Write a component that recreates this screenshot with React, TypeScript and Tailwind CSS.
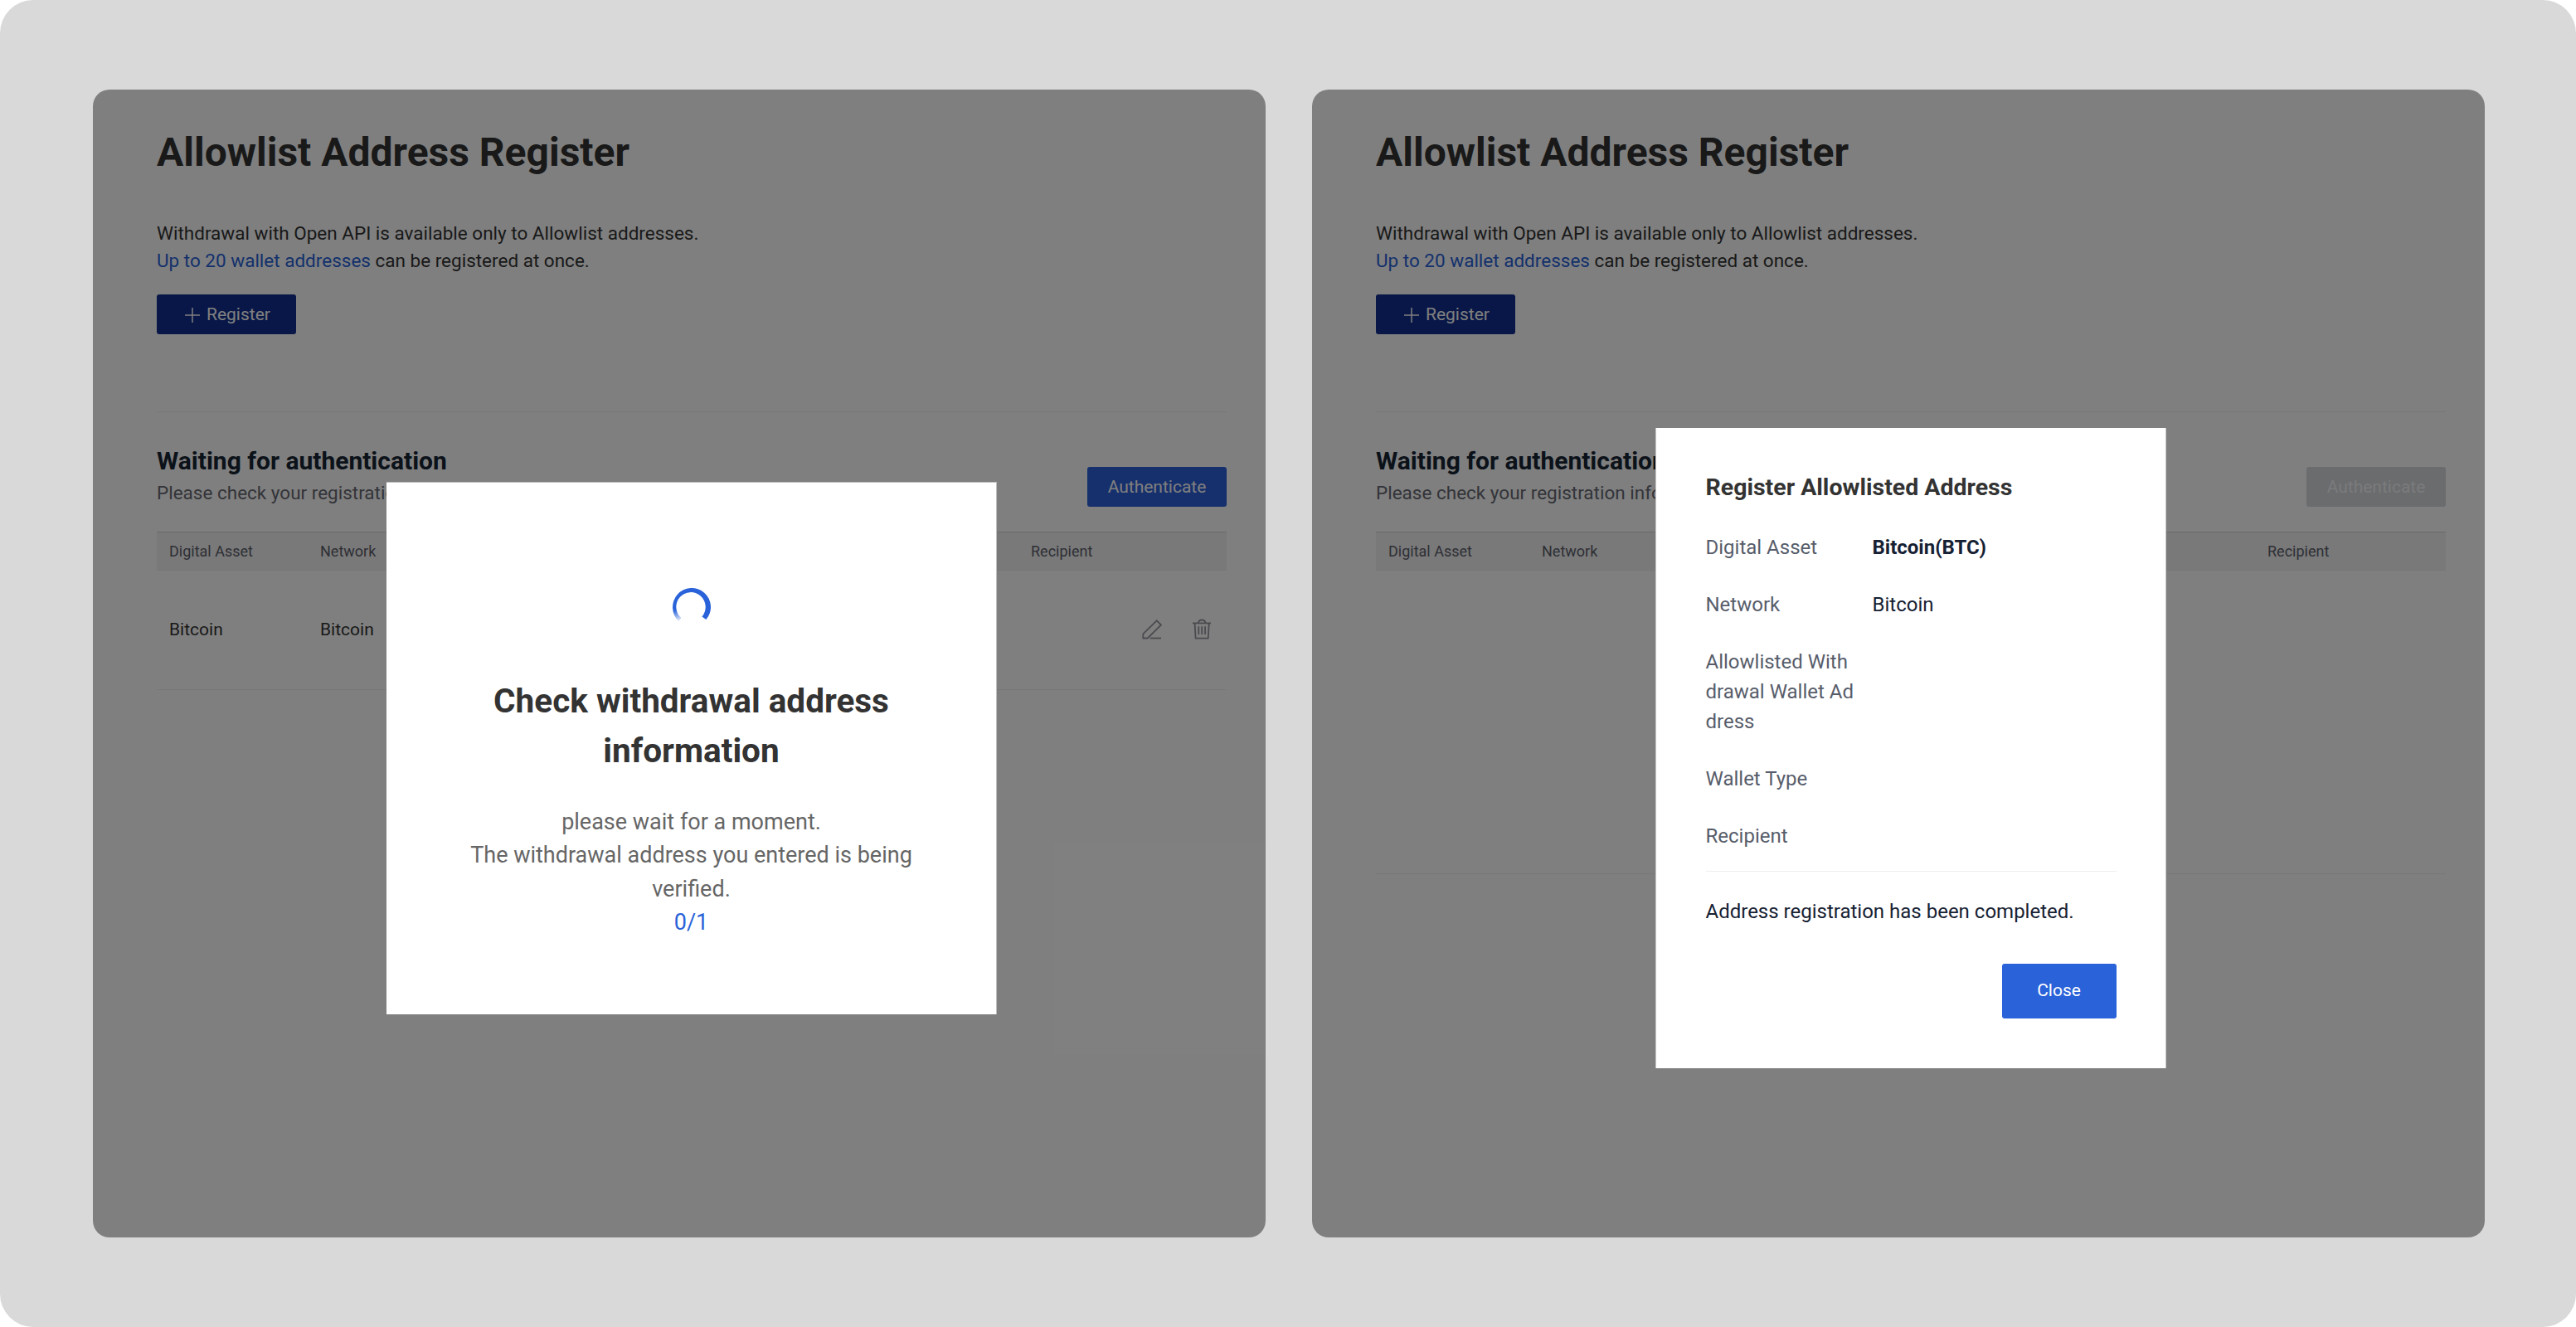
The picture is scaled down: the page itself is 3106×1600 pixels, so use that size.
import type { ReactNode } from "react";

interface AssetRow {
  asset: string;
  network: string;
}

interface RegisterPageProps {
  rows: AssetRow[];
  columns: string;
  children: ReactNode;
}

function PlusIcon() {
  return (
    <svg className="h-[18px] w-[18px]" viewBox="0 0 18 18" fill="none" stroke="currentColor" strokeWidth="1.5">
      <path d="M9 0v18M0 9h18" />
    </svg>
  );
}

function PencilIcon() {
  return (
    <svg className="h-6 w-6" viewBox="0 0 24 24" fill="none" stroke="currentColor" strokeWidth="1.8">
      <path d="M1.3 17.3 17.7 1.3 23 6.5 6.7 22.5H1.3z" />
      <path d="M9.7 22.5H23" />
    </svg>
  );
}

function TrashIcon() {
  return (
    <svg className="h-[25px] w-6" viewBox="0 0 24 25" fill="none" stroke="currentColor" strokeWidth="1.8">
      <path d="M1 5.4h22" />
      <path d="M3.6 5.4 4.6 23.6h15.1L20.8 5.4" />
      <path d="M7.7 5.2c.5-2.4 2.2-3.7 4.5-3.7s4 1.3 4.5 3.7" />
      <path d="M8.3 9.3v9.7M12.2 9.3v9.7M16.1 9.3v9.7" />
    </svg>
  );
}

function Spinner() {
  return (
    <svg className="h-[46px] w-[46px]" viewBox="0 0 46 46">
      <defs>
        <radialGradient id="spinner-tail" gradientUnits="userSpaceOnUse" cx="9" cy="41" r="16">
          <stop offset="0" stopColor="#2962d9" stopOpacity="0" />
          <stop offset="1" stopColor="#2962d9" />
        </radialGradient>
      </defs>
      <path
        fill="url(#spinner-tail)"
        d="M40.4 38.1A23 23 0 1 0 7.6 40.1L10.2 36A17.7 17.7 0 1 1 35.4 34.4Z"
      />
    </svg>
  );
}

function RegisterPage({ rows, columns, children }: RegisterPageProps) {
  const isEmpty = rows.length === 0;

  return (
    <section className="relative h-[1384px] w-[1414px] overflow-hidden rounded-[20px] bg-white pt-[46px] pr-[47px] pl-[77px]">
      <h1 className="text-[48px] leading-[60px] font-bold text-[#333333]">Allowlist Address Register</h1>

      <p className="mt-[51px] text-[22.5px] leading-[33px] text-[#333333]">
        Withdrawal with Open API is available only to Allowlist addresses.
        <br />
        <span className="text-[#2962d9]">Up to 20 wallet addresses</span> can be registered at once.
      </p>

      <button className="mt-6 flex h-12 w-[168px] items-center gap-2 rounded-[3px] bg-[#102f8f] pt-px pl-[34px] text-[21px] text-white">
        <PlusIcon />
        Register
      </button>

      <div className="mt-[93px] flex h-[115px] items-end justify-between border-t border-[#f0f0f0]">
        <div>
          <h2 className="text-[30px] leading-9 font-bold text-[#162433]">Waiting for authentication</h2>
          <p className="mt-1 text-[22.5px] leading-[33px] text-[#666872]">
            Please check your registration information.
          </p>
        </div>
        <button
          disabled={isEmpty}
          className={`h-12 w-[168px] rounded-[3px] pt-px text-[21px] ${
            isEmpty ? "bg-[#d5d8dc] text-[#f6f6f8]" : "bg-[#2c60da] text-white"
          }`}
        >
          Authenticate
        </button>
      </div>

      {/* Addresses that still need to be authenticated */}
      <div className="mt-[30px]">
        <div
          className={`grid h-[47px] items-center border-t border-b border-t-[#d4d4d6] border-b-[#ececec] bg-[#f2f2f3] text-[18px] text-[#5c5e6b] ${columns}`}
        >
          <span className="pl-[15px]">Digital Asset</span>
          <span className="pl-[15px]">Network</span>
          <span className="pl-[15px]">Recipient</span>
        </div>
        {rows.map((row) => (
          <div
            key={row.asset}
            className={`grid h-[144px] items-center border-b border-[#f0f0f0] text-[21px] text-[#333333] ${columns}`}
          >
            <span className="pl-[15px]">{row.asset}</span>
            <span className="pl-[15px]">{row.network}</span>
            <div className="flex items-center justify-end gap-9 pr-[18px] pb-0.5 text-[#94969f]">
              <PencilIcon />
              <TrashIcon />
            </div>
          </div>
        ))}
        {isEmpty && <div className="h-[366px] border-b border-[#f0f0f0]" />}
      </div>

      <div className="absolute inset-0 bg-black/50">{children}</div>
    </section>
  );
}

function CheckingModal() {
  return (
    <div className="absolute top-[473px] left-[354px] flex h-[642px] w-[736px] flex-col items-center border-t border-r border-[#bfbfbf] bg-white pt-[127px] text-center">
      <Spinner />
      <h3 className="mt-[60px] text-[40.5px] leading-[60px] font-bold text-[#333333]">
        Check withdrawal address
        <br />
        information
      </h3>
      <p className="mt-[35.5px] w-[560px] text-[27px] leading-[40.5px] text-[#666666]">
        please wait for a moment.
        <br />
        The withdrawal address you entered is being verified.
      </p>
      <span className="text-[27px] leading-[40.5px] text-[#2962d9]">0/1</span>
    </div>
  );
}

const details = [
  { label: "Digital Asset", value: "Bitcoin(BTC)", strong: true },
  { label: "Network", value: "Bitcoin" },
  { label: "Allowlisted Withdrawal Wallet Address", value: "" },
  { label: "Wallet Type", value: "" },
  { label: "Recipient", value: "" },
];

function CompletedModal() {
  return (
    <div className="absolute top-[408px] left-[414px] h-[772px] w-[616px] border-r border-l border-[#c8c8c8] bg-white px-[59.5px] pt-[50px]">
      <h3 className="text-[28.5px] leading-[43px] font-bold text-[#333333]">Register Allowlisted Address</h3>
      <dl className="mt-[33px] flex flex-col gap-[33px] border-b border-[#eeeeee] pb-6 text-[24px] leading-9">
        {details.map((item) => (
          <div key={item.label} className="flex">
            <dt className="mr-5 w-[181px] break-all text-[#575d6b]">{item.label}</dt>
            <dd className={item.strong ? "font-bold text-[#162133]" : "text-[#162133]"}>{item.value}</dd>
          </div>
        ))}
      </dl>
      <p className="mt-[30px] text-[24px] leading-9 text-[#162133]">Address registration has been completed.</p>
      <div className="mt-[45px] flex justify-end">
        <button className="h-[66px] w-[138px] rounded-[3px] bg-[#2962d9] text-[21px] text-white">
          Close
        </button>
      </div>
    </div>
  );
}

export default function App() {
  return (
    <div className="h-[1600px] w-[3106px] bg-white">
      <main className="flex h-full gap-14 rounded-[40px] bg-[#d9d9d9] pt-[108px] pl-28 font-['Roboto',sans-serif]">
        <RegisterPage rows={[{ asset: "Bitcoin", network: "Bitcoin" }]} columns="grid-cols-[182px_857px_1fr]">
          <CheckingModal />
        </RegisterPage>
        <RegisterPage rows={[]} columns="grid-cols-[185px_875px_1fr]">
          <CompletedModal />
        </RegisterPage>
      </main>
    </div>
  );
}
